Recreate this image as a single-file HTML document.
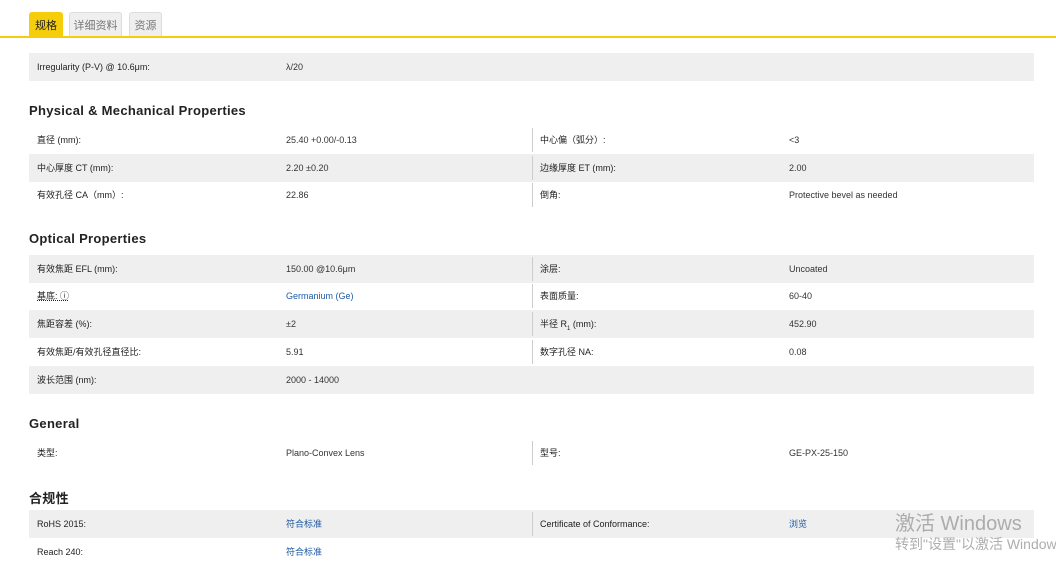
<!DOCTYPE html>
<html><head><meta charset="utf-8"><style>
*{margin:0;padding:0;box-sizing:border-box}
body{width:1056px;height:570px;overflow:hidden;background:#fff;font-family:"Liberation Sans","Noto Sans CJK SC",sans-serif;color:#333;position:relative}
.tab{position:absolute;top:12px;height:25px;font-size:11px;line-height:26px;text-align:center;border:1px solid #ddd;border-bottom:none;border-radius:3px 3px 0 0;background:#efefef;color:#777}
.tab.on{background:#f5cd0b;border-color:#f5cd0b;color:#222}
.bar{position:absolute;left:0;top:36px;width:1056px;height:2px;background:#f5cd0b}
.row{position:absolute;left:29px;width:1005px;height:28px;font-size:9px;line-height:28px}
.g{background:#efefef}
.row span{position:absolute;top:0;white-space:nowrap}
.l1{left:8px;color:#222}.v1{left:257px}.l2{left:511px;color:#222}.v2{left:760px}
.d{position:absolute;left:503px;top:2px;height:24px;border-left:1px solid #ccc}
.a{color:#1f5aa6}
h2{position:absolute;left:29px;font-size:13px;font-weight:bold;color:#222;letter-spacing:.3px}
.wm{position:absolute;left:895px;color:rgba(160,160,160,.85);white-space:nowrap}
</style></head><body>
<div class="tab on" style="left:29px;width:34px">规格</div>
<div class="tab" style="left:69px;width:53px">详细资料</div>
<div class="tab" style="left:129px;width:33px">资源</div>
<div class="bar"></div>

<div class="row g" style="top:53px"><span class="l1">Irregularity (P-V) @ 10.6μm:</span><span class="v1">λ/20</span></div>

<h2 style="top:103px">Physical &amp; Mechanical Properties</h2>
<div class="row" style="top:126px"><span class="l1">直径 (mm):</span><span class="v1">25.40 +0.00/-0.13</span><i class="d"></i><span class="l2">中心偏（弧分）:</span><span class="v2">&lt;3</span></div>
<div class="row g" style="top:154px"><span class="l1">中心厚度 CT (mm):</span><span class="v1">2.20 ±0.20</span><i class="d"></i><span class="l2">边缘厚度 ET (mm):</span><span class="v2">2.00</span></div>
<div class="row" style="top:181px"><span class="l1">有效孔径 CA（mm）:</span><span class="v1">22.86</span><i class="d"></i><span class="l2">倒角:</span><span class="v2">Protective bevel as needed</span></div>

<h2 style="top:231px">Optical Properties</h2>
<div class="row g" style="top:255px"><span class="l1">有效焦距 EFL (mm):</span><span class="v1">150.00 @10.6μm</span><i class="d"></i><span class="l2">涂层:</span><span class="v2">Uncoated</span></div>
<div class="row" style="top:282px"><span class="l1" style="text-decoration:underline dotted">基底: ⓘ</span><span class="v1 a">Germanium (Ge)</span><i class="d"></i><span class="l2">表面质量:</span><span class="v2">60-40</span></div>
<div class="row g" style="top:310px"><span class="l1">焦距容差 (%):</span><span class="v1">±2</span><i class="d"></i><span class="l2">半径 R<sub style="font-size:6px">1</sub> (mm):</span><span class="v2">452.90</span></div>
<div class="row" style="top:338px"><span class="l1">有效焦距/有效孔径直径比:</span><span class="v1">5.91</span><i class="d"></i><span class="l2">数字孔径 NA:</span><span class="v2">0.08</span></div>
<div class="row g" style="top:366px"><span class="l1">波长范围 (nm):</span><span class="v1">2000 - 14000</span></div>

<h2 style="top:416px">General</h2>
<div class="row" style="top:439px"><span class="l1">类型:</span><span class="v1">Plano-Convex Lens</span><i class="d"></i><span class="l2">型号:</span><span class="v2">GE-PX-25-150</span></div>

<h2 style="top:488px">合规性</h2>
<div class="row g" style="top:510px"><span class="l1">RoHS 2015:</span><span class="v1 a">符合标准</span><i class="d"></i><span class="l2">Certificate of Conformance:</span><span class="v2 a">浏览</span></div>
<div class="row" style="top:538px"><span class="l1">Reach 240:</span><span class="v1 a">符合标准</span></div>

<div class="wm" style="top:507px;font-size:20px">激活 Windows</div>
<div class="wm" style="top:534px;font-size:14px">转到"设置"以激活 Windows。</div>
</body></html>
